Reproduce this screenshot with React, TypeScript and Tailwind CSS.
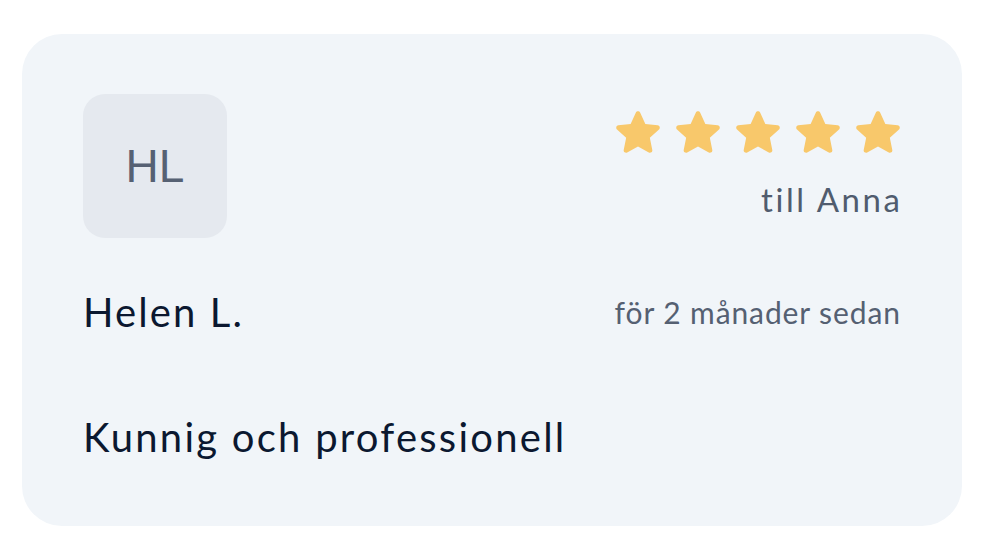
const stars = [0, 1, 2, 3, 4]

function Star() {
  return (
    <svg width="44" height="42" viewBox="1.3 1.1 21.4 20.5" className="block">
      <path
        d="M12 1.2c.45 0 .85.26 1.03.67l2.56 5.53 6.02.7c.45.05.83.36.97.79.14.43.01.9-.33 1.2l-4.47 4.09 1.2 5.94c.09.44-.09.9-.46 1.16-.37.27-.86.29-1.25.07L12 18.37l-5.27 2.98c-.39.22-.88.2-1.25-.07-.37-.26-.55-.72-.46-1.16l1.2-5.94L1.75 10.1c-.34-.3-.47-.77-.33-1.2.14-.43.52-.74.97-.79l6.02-.7 2.56-5.53c.18-.41.58-.67 1.03-.67z"
        fill="#f8c86b"
      />
    </svg>
  )
}

export default function App() {
  return (
    <div className="min-h-screen bg-white pt-[34px] pl-[22px]" style={{ fontFamily: "Lato, 'Noto Sans', sans-serif" }}>
      <div className="w-[940px] h-[492px] rounded-[40px] bg-[#f1f5f9] pl-[61px] pr-[62px] pt-[60px]">
        {/* Top row - avatar and rating */}
        <div className="flex justify-between">
          <div
            className="w-[144px] h-[144px] rounded-[22px] bg-[#e5e9ef] flex items-center justify-center text-[46px] text-[#566173]"
            style={{ fontFamily: "'Liberation Sans', Arial, sans-serif" }}
          >
            HL
          </div>
          <div className="flex flex-col items-end pt-[17px]">
            <div className="flex gap-[16px]">
              {stars.map((i) => (
                <Star key={i} />
              ))}
            </div>
            <p className="mt-[30px] text-[33px] leading-none tracking-[2.6px] -mr-[2.6px] text-[#505c6e]">till Anna</p>
          </div>
        </div>

        {/* Name and date */}
        <div className="flex justify-between items-center mt-[54px]">
          <h3 className="text-[40px] leading-none tracking-[2.1px] text-[#0b1830]">Helen L.</h3>
          <p className="text-[30px] leading-none tracking-[0.9px] -mr-[0.9px] text-[#556072]">för 2 månader sedan</p>
        </div>

        {/* Review text */}
        <p className="mt-[85px] text-[40px] leading-none tracking-[2.25px] text-[#0b1830]">Kunnig och professionell</p>
      </div>
    </div>
  )
}
